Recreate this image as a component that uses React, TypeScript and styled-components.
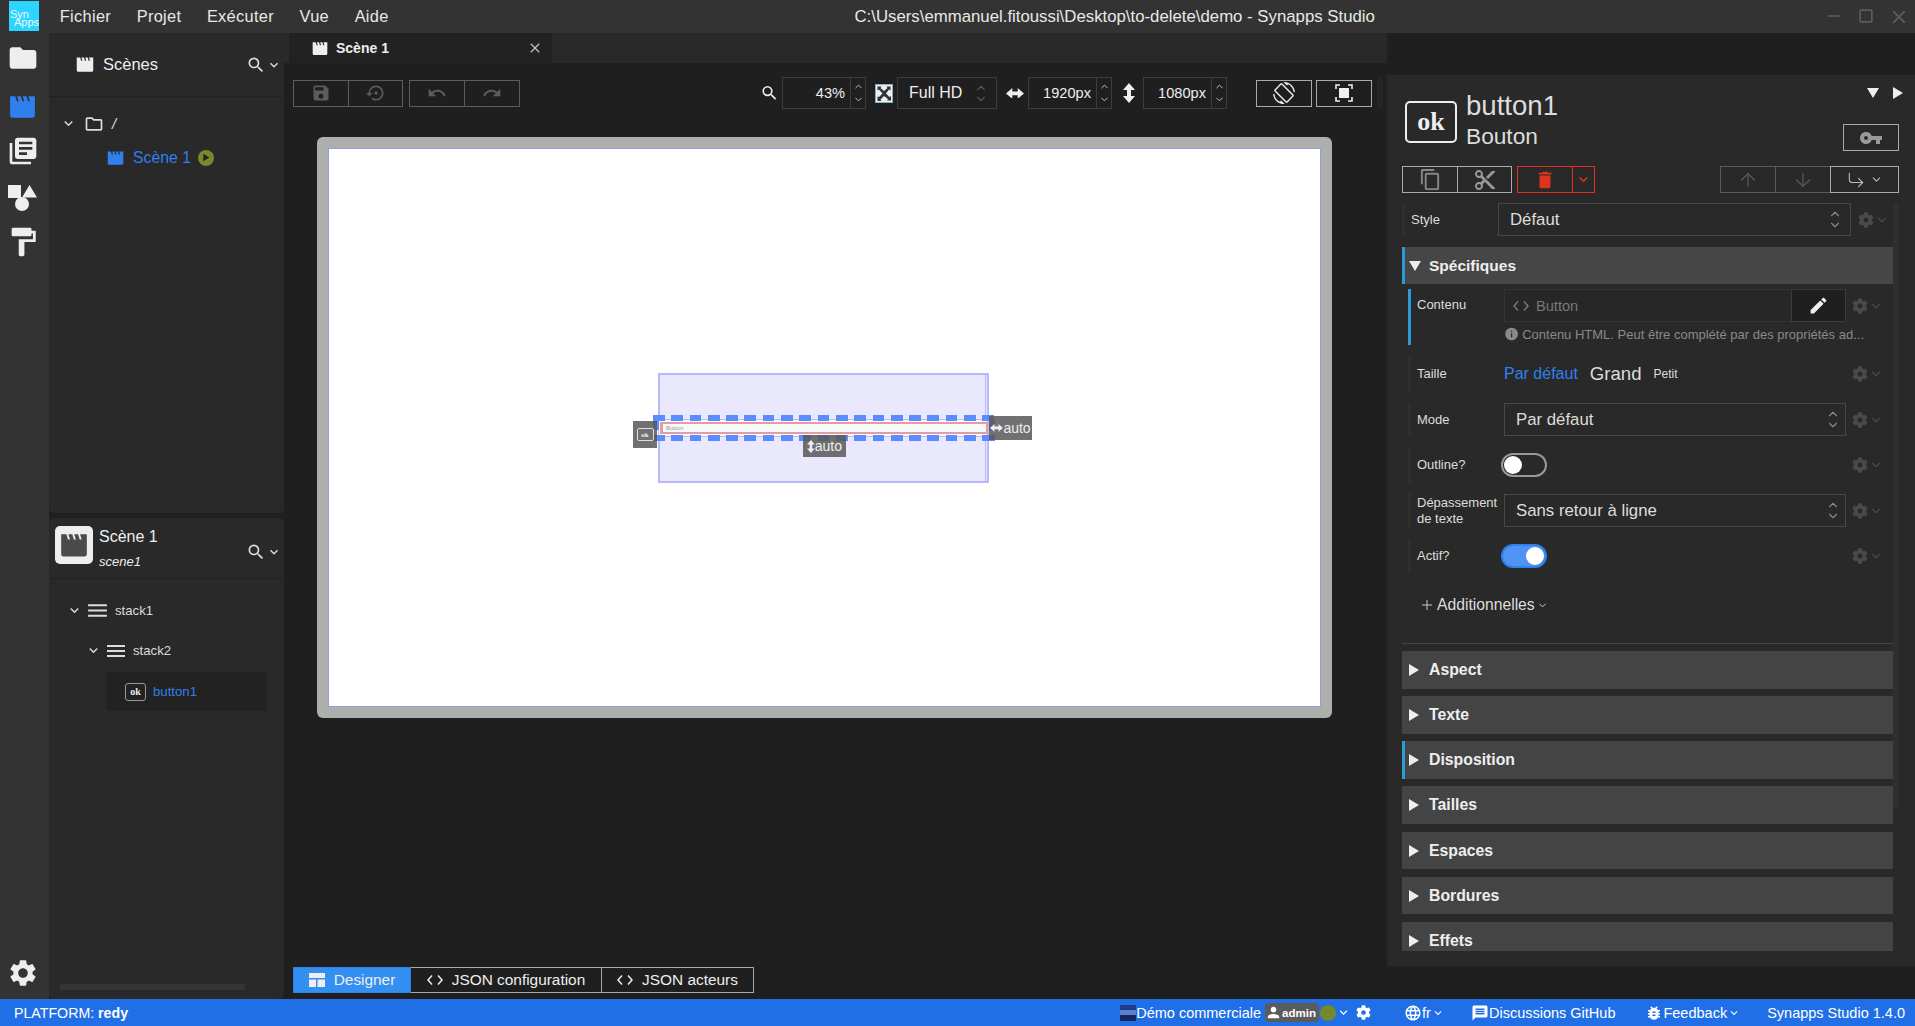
import { FC } from "react";
import styled, { createGlobalStyle } from "styled-components";
import {
  MdFolder,
  MdOutlineFolder,
  MdLibraryBooks,
  MdFormatPaint,
  MdSettings,
  MdSearch,
  MdKeyboardArrowDown,
  MdSave,
  MdSettingsBackupRestore,
  MdUndo,
  MdRedo,
  MdScreenRotation,
  MdVpnKey,
  MdContentCopy,
  MdContentCut,
  MdDelete,
  MdEdit,
  MdInfo,
  MdLanguage,
  MdMessage,
  MdBugReport,
  MdPerson,
  MdClose,
  MdMenu,
  MdPlayArrow,
  MdRemove,
  MdCropSquare,
} from "react-icons/md";
import { FaCog } from "react-icons/fa";
import {
  ArrowUp,
  ArrowDown,
  ChevronDown,
  ChevronUp,
  CornerDownRight,
  Plus,
} from "lucide-react";

const GlobalStyle = createGlobalStyle`
  html, body, #root {
    margin: 0;
    height: 100%;
    overflow: hidden;
    background: #1f1f1f;
  }
  * {
    box-sizing: border-box;
  }
  body {
    font-family: "Liberation Sans", Arial, sans-serif;
    color: #eee;
  }
`;

const Clapper: FC<{ size: number; color?: string }> = ({ size, color = "currentColor" }) => (
  <svg width={size} height={(size * 22) / 24} viewBox="0 0 24 22" fill={color}>
    <path
      fillRule="evenodd"
      d="M1 2h22v17a2 2 0 0 1-2 2H3a2 2 0 0 1-2-2V2ZM5.5 2l1.4 4.4h1.7L7.2 2H5.5Zm5 0 1.4 4.4h1.7L12.2 2h-1.7Zm5 0 1.4 4.4h1.7L17.2 2h-1.7Z"
    />
  </svg>
);

const ShapesIcon = () => (
  <svg width="29" height="26" viewBox="0 0 29 26" fill="#eee">
    <rect x="0" y="0" width="13" height="13" />
    <path d="M21.5 0 29 12.5H14Z" />
    <circle cx="14" cy="19" r="7" />
  </svg>
);

const FitIcon = () => (
  <svg width="18" height="19" viewBox="0 0 18 19">
    <rect x="0.5" y="0.5" width="17" height="18" fill="#eee" stroke="#7fb2d0" />
    <path d="M2.5 2.5h4L5.5 4 9 7l3.500-3-1-1.500h4v4l-1.500-1L11 9.500l3.500 3.500 1.500-1v4.500h-4l1-1.500L9 12l-3.500 3.500 1 1.500h-4v-4.500L4 13l3.500-3.500L4 5.500l-1.500 1Z" fill="#333" />
  </svg>
);

const FocusIcon = () => (
  <svg width="18" height="18" viewBox="0 0 18 18" fill="none" stroke="#eee" strokeWidth="1.6">
    <path d="M1 5V1h4M13 1h4v4M17 13v4h-4M5 17H1v-4" />
    <rect x="4" y="4" width="10" height="10" fill="#eee" stroke="none" />
  </svg>
);

const DesignerIcon = () => (
  <svg width="16" height="14" viewBox="0 0 16 14" fill="#eee">
    <rect x="0" y="0" width="16" height="5" />
    <rect x="0" y="6.5" width="7" height="7.5" />
    <rect x="8.5" y="6.5" width="7.5" height="7.5" />
  </svg>
);

const CodeIcon: FC<{ size?: number }> = ({ size = 16 }) => (
  <svg width={size} height={size} viewBox="0 0 16 16" fill="none" stroke="currentColor" strokeWidth="1.5">
    <path d="M5 3.5 1 8l4 4.5M11 3.5 15 8l-4 4.5" />
  </svg>
);

const ArrowsV: FC<{ h?: number }> = ({ h = 20 }) => (
  <svg width={(h * 12) / 20} height={h} viewBox="0 0 12 20" fill="currentColor">
    <path d="M6 0 12 7H8v6h4l-6 7-6-7h4V7H0Z" />
  </svg>
);

const ArrowsH: FC<{ w?: number }> = ({ w = 18 }) => (
  <svg width={w} height={(w * 12) / 20} viewBox="0 0 20 12" fill="currentColor">
    <path d="M0 6 7 0v4h6V0l7 6-7 6V8H7v4Z" />
  </svg>
);

const App: FC = () => {
  const sections = [
    { name: "Aspect", height: 38, top: 7 },
    { name: "Texte", height: 38, top: 7 },
    { name: "Disposition", height: 38, top: 7, accent: true },
    { name: "Tailles", height: 38, top: 7 },
    { name: "Espaces", height: 37, top: 8 },
    { name: "Bordures", height: 37, top: 8 },
    { name: "Effets", height: 38, top: 8 },
  ];

  return (
    <>
      <GlobalStyle />
      <Page>
        <TopBar>
          <Logo>
            <span>Syn</span>
            <LogoSecond>Apps</LogoSecond>
          </Logo>
          <MenuItem>Fichier</MenuItem>
          <MenuItem>Projet</MenuItem>
          <MenuItem>Exécuter</MenuItem>
          <MenuItem>Vue</MenuItem>
          <MenuItem>Aide</MenuItem>
          <WindowTitle>C:\Users\emmanuel.fitoussi\Desktop\to-delete\demo - Synapps Studio</WindowTitle>
          <WindowControls>
            <MdRemove size={20} />
            <MdCropSquare size={20} />
            <MdClose size={22} />
          </WindowControls>
        </TopBar>

        <Body>
          <Rail>
            <RailIcon $top={9}><MdFolder size={32} /></RailIcon>
            <RailIcon $top={20} $active><Clapper size={27} /></RailIcon>
            <RailIcon $top={16}><MdLibraryBooks size={32} /></RailIcon>
            <RailIcon $top={18}><ShapesIcon /></RailIcon>
            <RailIcon $top={14}><MdFormatPaint size={34} /></RailIcon>
            <RailGear><MdSettings size={32} /></RailGear>
          </Rail>

          <LeftColumn>
            <ScenesPanel>
              <ScenesHeader>
                <Clapper size={18} />
                <ScenesTitle>Scènes</ScenesTitle>
                <HeaderTools>
                  <MdSearch size={20} />
                  <MdKeyboardArrowDown size={16} />
                </HeaderTools>
              </ScenesHeader>
              <TreeRow $indent={11} $height={31} $top={11}>
                <MdKeyboardArrowDown size={17} />
                <TreeIcon $left={7}><MdOutlineFolder size={20} /></TreeIcon>
                <SlashText>/</SlashText>
              </TreeRow>
              <TreeRow $indent={58} $height={31} $top={3} $active>
                <Clapper size={17} />
                <SceneName>Scène 1</SceneName>
                <PlayBadge><MdPlayArrow size={13} /></PlayBadge>
              </TreeRow>
            </ScenesPanel>

            <ScenePanel>
              <SceneHeader>
                <SceneTile><Clapper size={28} color="#4a4a4a" /></SceneTile>
                <SceneTitles>
                  <SceneTitle>Scène 1</SceneTitle>
                  <SceneId>scene1</SceneId>
                </SceneTitles>
                <SceneTools>
                  <MdSearch size={20} />
                  <MdKeyboardArrowDown size={16} />
                </SceneTools>
              </SceneHeader>
              <TreeRow $indent={17} $height={33} $top={15}>
                <MdKeyboardArrowDown size={17} />
                <TreeIcon $left={2}><MdMenu size={25} /></TreeIcon>
                <NodeName $left={5}>stack1</NodeName>
              </TreeRow>
              <TreeRow $indent={36} $height={33} $top={7}>
                <MdKeyboardArrowDown size={17} />
                <TreeIcon $left={2}><MdMenu size={24} /></TreeIcon>
                <NodeName $left={5}>stack2</NodeName>
              </TreeRow>
              <SelectedNode>
                <OkBadge $w={21} $h={18} $font={10} $border="#999" $radius={3}>ok</OkBadge>
                <NodeName $left={7} $active>button1</NodeName>
              </SelectedNode>
              <PanelScrollbar />
            </ScenePanel>
          </LeftColumn>

          <Main>
            <TabBar>
              <Tab>
                <Clapper size={16} />
                <TabLabel>Scène 1</TabLabel>
                <TabClose><MdClose size={16} /></TabClose>
              </Tab>
            </TabBar>

            <Toolbar>
              <ButtonGroup>
                <ToolButton $w={56} $muted><MdSave size={20} /></ToolButton>
                <ToolButton $w={55} $muted><MdSettingsBackupRestore size={20} /></ToolButton>
              </ButtonGroup>
              <ButtonGroup $left={6}>
                <ToolButton $w={56} $muted><MdUndo size={20} /></ToolButton>
                <ToolButton $w={56} $muted><MdRedo size={20} /></ToolButton>
              </ButtonGroup>
              <GlyphCell $w={22} $pad={3} $auto><MdSearch size={20} /></GlyphCell>
              <SpinField>
                <SpinValue>43%</SpinValue>
                <SpinButtons><ChevronUp size={11} /><ChevronDown size={11} /></SpinButtons>
              </SpinField>
              <GlyphCell $w={31} $pad={4}><FitIcon /></GlyphCell>
              <ResolutionSelect>
                Full HD
                <UpDown $color="#555" $right={8}><ChevronUp size={14} /><ChevronDown size={14} /></UpDown>
              </ResolutionSelect>
              <GlyphCell $w={31} $pad={4}><ArrowsH /></GlyphCell>
              <SpinField>
                <SpinValue>1920px</SpinValue>
                <SpinButtons><ChevronUp size={11} /><ChevronDown size={11} /></SpinButtons>
              </SpinField>
              <GlyphCell $w={31} $pad={8}><ArrowsV /></GlyphCell>
              <SpinField>
                <SpinValue>1080px</SpinValue>
                <SpinButtons><ChevronUp size={11} /><ChevronDown size={11} /></SpinButtons>
              </SpinField>
              <ViewButtons>
                <ToolButton $w={56} $bright><MdScreenRotation size={22} /></ToolButton>
                <ToolButton $w={56} $bright><FocusIcon /></ToolButton>
              </ViewButtons>
              <ToolbarScroll />
            </Toolbar>

            <Frame>
              <Viewport>
                <OuterStack />
                <ButtonOutline />
                <DashedSelection />
                <SelectedButton>Button</SelectedButton>
                <TypeLabel>
                  <OkBadge $w={17} $h={13} $font={7} $border="#ddd" $radius={2}>ok</OkBadge>
                </TypeLabel>
                <WidthLabel><ArrowsH w={13} />auto</WidthLabel>
                <HeightLabel><ArrowsV h={13} />auto</HeightLabel>
              </Viewport>
            </Frame>

            <ModeTabs>
              <ModeTab $w={118} $active><DesignerIcon />Designer</ModeTab>
              <ModeTab $w={191}><CodeIcon />JSON configuration</ModeTab>
              <ModeTab $w={152}><CodeIcon />JSON acteurs</ModeTab>
            </ModeTabs>
          </Main>

          <Inspector>
            <InspectorHeader>
              <InspectorBadge $w={52} $h={42} $font={26} $border="#eee" $radius={5}>ok</InspectorBadge>
              <InspectorTitles>
                <InspectorName>button1</InspectorName>
                <InspectorType>Bouton</InspectorType>
              </InspectorTitles>
              <InspectorCorner>
                <PanelArrows>
                  <TriangleDown $size={6} />
                  <TriangleRight $size={6} />
                </PanelArrows>
                <ToolButton $w={56} $bright><MdVpnKey size={24} color="#999" /></ToolButton>
              </InspectorCorner>
            </InspectorHeader>

            <ActionRow>
              <ButtonGroup>
                <ToolButton $w={56} $bright><MdContentCopy size={23} color="#888" /></ToolButton>
                <ToolButton $w={55} $bright><MdContentCut size={24} color="#999" /></ToolButton>
              </ButtonGroup>
              <ButtonGroup $left={5}>
                <ToolButton $w={56} $danger><MdDelete size={22} /></ToolButton>
                <ToolButton $w={23} $danger><MdKeyboardArrowDown size={17} /></ToolButton>
              </ButtonGroup>
              <ButtonGroup $auto>
                <ToolButton $w={56} $muted><ArrowUp size={22} strokeWidth={1.3} /></ToolButton>
                <ToolButton $w={56} $muted><ArrowDown size={22} strokeWidth={1.3} /></ToolButton>
                <ToolButton $w={69} $bright>
                  <CornerDownRight size={20} strokeWidth={1.3} color="#bbb" />
                  <ChevronDown size={13} color="#bbb" />
                </ToolButton>
              </ButtonGroup>
            </ActionRow>

            <PropsScroll>
              <PropRow $indent={0} $bar="#2f2f2f" $height={33}>
                <PropLabel>Style</PropLabel>
                <PropSelect $w={353}>
                  Défaut
                  <UpDown $color="#888" $right={8}><ChevronUp size={14} /><ChevronDown size={14} /></UpDown>
                </PropSelect>
                <GearMenu $left={7} />
              </PropRow>

              <OpenSection>
                <TriangleDown $size={6} />
                <OpenTitle>Spécifiques</OpenTitle>
              </OpenSection>

              <PropRow $top={5} $bar="#2a9ad8" $height={56} $start>
                <PropLabel $top={8}>Contenu</PropLabel>
                <ContentColumn>
                  <ContentInput>
                    <ContentField>
                      <CodeIcon size={16} />
                      <span>Button</span>
                    </ContentField>
                    <EditButton><MdEdit size={21} /></EditButton>
                  </ContentInput>
                  <HelpText>
                    <MdInfo size={16} />
                    <span>Contenu HTML. Peut être complété par des propriétés ad...</span>
                  </HelpText>
                </ContentColumn>
                <GearMenu $left={6} $alignTop />
              </PropRow>

              <PropRow $top={12} $height={34}>
                <PropLabel>Taille</PropLabel>
                <SizeOptions>
                  <SizeOption $size={16} $color="#2f80ed">Par défaut</SizeOption>
                  <SizeOption $size={18.6} $color="#ddd">Grand</SizeOption>
                  <SizeOption $size={12} $color="#ddd">Petit</SizeOption>
                </SizeOptions>
                <GearMenu $left={6} />
              </PropRow>

              <PropRow $top={12} $height={33}>
                <PropLabel>Mode</PropLabel>
                <PropSelect $w={342}>
                  Par défaut
                  <UpDown $color="#888" $right={5}><ChevronUp size={14} /><ChevronDown size={14} /></UpDown>
                </PropSelect>
                <GearMenu $left={6} />
              </PropRow>

              <PropRow $top={12} $height={34}>
                <PropLabel>Outline?</PropLabel>
                <ToggleSlot>
                  <Toggle $on={false} />
                </ToggleSlot>
                <GearMenu $left={6} />
              </PropRow>

              <PropRow $top={12} $height={33}>
                <PropLabel>Dépassement de texte</PropLabel>
                <PropSelect $w={342}>
                  Sans retour à ligne
                  <UpDown $color="#888" $right={5}><ChevronUp size={14} /><ChevronDown size={14} /></UpDown>
                </PropSelect>
                <GearMenu $left={6} />
              </PropRow>

              <PropRow $top={12} $height={34}>
                <PropLabel>Actif?</PropLabel>
                <ToggleSlot>
                  <Toggle $on />
                </ToggleSlot>
                <GearMenu $left={6} />
              </PropRow>

              <Additional>
                <Plus size={16} strokeWidth={1.3} />
                Additionnelles
                <ChevronDown size={11} />
              </Additional>
              <Divider />

              {sections.map((section) => (
                <ClosedSection key={section.name} $height={section.height} $top={section.top} $accent={section.accent}>
                  <TriangleRight $size={6} />
                  <SectionTitle>{section.name}</SectionTitle>
                </ClosedSection>
              ))}
              <ScrollTrack />
            </PropsScroll>
          </Inspector>
        </Body>

        <StatusBar>
          <StatusLeft>PLATFORM: <b>redy</b></StatusLeft>
          <StatusGroup>
            <Flag />
            <StatusText>Démo commerciale</StatusText>
            <AdminPill><MdPerson size={17} />admin</AdminPill>
            <StatusDot />
            <MdKeyboardArrowDown size={15} />
            <StatusGear><FaCog size={15} /></StatusGear>
          </StatusGroup>
          <StatusGroup $left={33}>
            <MdLanguage size={18} />
            <StatusText>fr</StatusText>
            <MdKeyboardArrowDown size={14} />
          </StatusGroup>
          <StatusGroup $left={26}>
            <MdMessage size={18} />
            <StatusText>Discussions GitHub</StatusText>
          </StatusGroup>
          <StatusGroup $left={30}>
            <MdBugReport size={18} />
            <StatusText>Feedback</StatusText>
            <MdKeyboardArrowDown size={14} />
          </StatusGroup>
          <VersionText>Synapps Studio 1.4.0</VersionText>
        </StatusBar>
      </Page>
    </>
  );
};

export default App;

const Page = styled.div`
  width: 1915px;
  height: 1026px;
  display: flex;
  flex-direction: column;
  background: #1f1f1f;
`;

const TopBar = styled.div`
  height: 33px;
  flex: none;
  display: flex;
  align-items: center;
  background: #333;
  font-size: 16px;
  color: #e8e8e8;
`;

const Logo = styled.div`
  width: 30px;
  height: 30px;
  margin: 0 8px 2px 9px;
  padding: 9px 0 0 1px;
  background: #2dd4ff;
  font-size: 11px;
  line-height: 8px;
  color: #e8f8ff;
  display: flex;
  flex-direction: column;
  overflow: hidden;
`;

const LogoSecond = styled.span`
  margin-left: 4px;
`;

const MenuItem = styled.div`
  margin: 0 12.8px;
  font-size: 16.4px;
  letter-spacing: 0.3px;
`;

const WindowTitle = styled.div`
  margin-left: 453px;
  font-size: 16.8px;
  white-space: nowrap;
`;

const WindowControls = styled.div`
  margin-left: auto;
  margin-right: 5px;
  display: flex;
  gap: 12px;
  color: #5c5c5c;
`;

const Body = styled.div`
  flex: 1;
  min-height: 0;
  display: flex;
`;

const Rail = styled.div`
  width: 49px;
  flex: none;
  display: flex;
  flex-direction: column;
  align-items: center;
  background: #333;
`;

const RailIcon = styled.div<{ $top: number; $active?: boolean }>`
  margin-top: ${(p) => p.$top}px;
  margin-left: -4px;
  display: flex;
  color: ${(p) => (p.$active ? "#2f80ed" : "#eee")};
`;

const RailGear = styled.div`
  margin-top: auto;
  margin-bottom: 10px;
  margin-left: -4px;
  display: flex;
  color: #eee;
`;

const LeftColumn = styled.div`
  width: 235px;
  flex: none;
  display: flex;
  flex-direction: column;
  gap: 5px;
`;

const ScenesPanel = styled.div`
  height: 480px;
  flex: none;
  background: #292929;
  border-radius: 0 0 5px 5px;
`;

const ScenesHeader = styled.div`
  height: 64px;
  padding: 0 2px 0 27px;
  display: flex;
  align-items: center;
  border-bottom: 1px solid #222;
`;

const ScenesTitle = styled.div`
  margin-left: 9px;
  font-size: 16.5px;
`;

const HeaderTools = styled.div`
  margin-left: auto;
  display: flex;
  align-items: center;
  color: #ddd;
`;

const TreeRow = styled.div<{ $indent: number; $height: number; $top: number; $active?: boolean }>`
  height: ${(p) => p.$height}px;
  margin-top: ${(p) => p.$top}px;
  padding-left: ${(p) => p.$indent}px;
  display: flex;
  align-items: center;
  color: ${(p) => (p.$active ? "#2f80ed" : "#ddd")};
`;

const TreeIcon = styled.span<{ $left: number }>`
  margin-left: ${(p) => p.$left}px;
  display: flex;
`;

const SlashText = styled.span`
  margin-left: 8px;
  font-size: 15px;
  font-style: italic;
`;

const SceneName = styled.span`
  margin-left: 9px;
  font-size: 15.8px;
`;

const PlayBadge = styled.span`
  width: 16px;
  height: 16px;
  margin-left: 7px;
  border-radius: 50%;
  background: #77892a;
  color: #222;
  display: flex;
  align-items: center;
  justify-content: center;
`;

const ScenePanel = styled.div`
  flex: 1;
  position: relative;
  background: #292929;
  border-radius: 5px;
`;

const SceneHeader = styled.div`
  height: 61px;
  padding: 8px 2px 0 6px;
  display: flex;
  border-bottom: 1px solid #222;
`;

const SceneTile = styled.div`
  width: 38px;
  height: 38px;
  background: #eee;
  border-radius: 5px;
  display: flex;
  align-items: center;
  justify-content: center;
`;

const SceneTitles = styled.div`
  margin-left: 6px;
  padding-top: 1px;
`;

const SceneTitle = styled.div`
  font-size: 16px;
  line-height: 20px;
`;

const SceneId = styled.div`
  margin-top: 7px;
  font-size: 13px;
  font-style: italic;
`;

const SceneTools = styled.div`
  margin-left: auto;
  height: 40px;
  padding-top: 12px;
  display: flex;
  align-items: center;
  color: #ddd;
`;

const NodeName = styled.span<{ $left: number; $active?: boolean }>`
  margin-left: ${(p) => p.$left}px;
  font-size: 13.2px;
  color: ${(p) => (p.$active ? "#2f80ed" : "#ddd")};
`;

const SelectedNode = styled.div`
  width: 161px;
  height: 39px;
  margin: 5px 0 0 57px;
  padding-left: 19px;
  background: #222;
  display: flex;
  align-items: center;
`;

const OkBadge = styled.span<{ $w: number; $h: number; $font: number; $border: string; $radius: number }>`
  width: ${(p) => p.$w}px;
  height: ${(p) => p.$h}px;
  flex: none;
  border: ${(p) => (p.$w > 30 ? 2 : 1)}px solid ${(p) => p.$border};
  border-radius: ${(p) => p.$radius}px;
  display: flex;
  align-items: center;
  justify-content: center;
  font-family: "Liberation Serif", "Times New Roman", serif;
  font-weight: 700;
  font-size: ${(p) => p.$font}px;
  color: #eee;
`;

const InspectorBadge = styled(OkBadge)`
  margin-bottom: 8px;
`;

const PanelScrollbar = styled.div`
  position: absolute;
  left: 11px;
  bottom: 9px;
  width: 185px;
  height: 6px;
  background: #353535;
`;

const Main = styled.div`
  flex: 1;
  min-width: 0;
  display: flex;
  flex-direction: column;
`;

const TabBar = styled.div`
  height: 30px;
  flex: none;
  padding-left: 5px;
  background: #292929;
`;

const Tab = styled.div`
  width: 263px;
  height: 30px;
  padding: 0 9px 0 23px;
  background: #222;
  display: flex;
  align-items: center;
  color: #eee;
`;

const TabLabel = styled.span`
  margin-left: 8px;
  font-size: 14px;
  font-weight: 700;
`;

const TabClose = styled.span`
  margin-left: auto;
  display: flex;
  color: #bbb;
`;

const Toolbar = styled.div`
  height: 32px;
  flex: none;
  margin-top: 14px;
  padding: 0 4px 0 9px;
  display: flex;
  align-items: center;
`;

const ToolbarScroll = styled.div`
  width: 6px;
  height: 32px;
  margin-left: 5px;
  background: #252525;
`;

const ButtonGroup = styled.div<{ $left?: number; $auto?: boolean }>`
  margin-left: ${(p) => (p.$auto ? "auto" : `${p.$left ?? 0}px`)};
  display: flex;
`;

const ToolButton = styled.div<{
  $w: number;
  $muted?: boolean;
  $bright?: boolean;
  $danger?: boolean;
}>`
  width: ${(p) => p.$w}px;
  height: 27px;
  display: flex;
  align-items: center;
  justify-content: center;
  gap: 4px;
  border: 1px solid
    ${(p) => (p.$danger ? "#e0331b" : p.$bright ? "#aaa" : "#5c5c5c")};
  color: ${(p) => (p.$danger ? "#e0331b" : p.$bright ? "#eee" : "#5c5c5c")};
  & + & {
    margin-left: -1px;
  }
`;

const GlyphCell = styled.div<{ $w: number; $pad: number; $auto?: boolean }>`
  width: ${(p) => p.$w}px;
  margin-left: ${(p) => (p.$auto ? "auto" : "0")};
  padding-right: ${(p) => p.$pad}px;
  display: flex;
  justify-content: flex-end;
  color: #eee;
`;

const SpinField = styled.div`
  width: 84px;
  height: 32px;
  display: flex;
  border: 1px solid #3c3c3c;
`;

const SpinValue = styled.div`
  flex: 1;
  padding-right: 5px;
  display: flex;
  align-items: center;
  justify-content: flex-end;
  font-size: 14.6px;
`;

const SpinButtons = styled.div`
  width: 15px;
  display: flex;
  flex-direction: column;
  align-items: center;
  justify-content: center;
  gap: 2px;
  border-left: 1px solid #3c3c3c;
  color: #ccc;
`;

const UpDown = styled.span<{ $color: string; $right: number }>`
  margin-left: auto;
  margin-right: ${(p) => p.$right}px;
  display: flex;
  flex-direction: column;
  color: ${(p) => p.$color};
  & > svg + svg {
    margin-top: -3px;
  }
`;

const ResolutionSelect = styled.div`
  width: 100px;
  height: 32px;
  padding-left: 11px;
  display: flex;
  align-items: center;
  border: 1px solid #3c3c3c;
  font-size: 16px;
`;

const ViewButtons = styled.div`
  margin-left: 29px;
  display: flex;
  gap: 5px;
`;

const Frame = styled.div`
  width: 1015px;
  height: 581px;
  flex: none;
  margin: 28px 0 0 33px;
  padding: 11px;
  background: #adafad;
  border-radius: 6px;
`;

const Viewport = styled.div`
  position: relative;
  width: 100%;
  height: 100%;
  background: #fff;
  border: 1px solid #9a9ae8;
`;

const OuterStack = styled.div`
  position: absolute;
  left: 329px;
  top: 224px;
  width: 331px;
  height: 110px;
  background: #e9e8fd;
  border: 2px solid #b8b8ff;
  &::after {
    content: "";
    position: absolute;
    top: 0;
    bottom: 0;
    right: 1px;
    width: 1px;
    background: #b8b8ff;
  }
`;

const ButtonOutline = styled.div`
  position: absolute;
  left: 329px;
  top: 270px;
  width: 330px;
  height: 18px;
  background: #fbfbff;
  border: 1px solid #b8b8ff;
`;

const dash = "repeating-linear-gradient(90deg, #5b8cff 0 11.7px, transparent 11.7px 18.3px)";

const DashedSelection = styled.div`
  position: absolute;
  left: 324px;
  top: 266px;
  width: 342px;
  height: 26px;
  background:
    ${dash} top left / 100% 6px no-repeat,
    ${dash} bottom left / 100% 6px no-repeat;
  &::before,
  &::after {
    content: "";
    position: absolute;
    top: 6px;
    bottom: 0;
    width: 6px;
    background: linear-gradient(#5b8cff 0 9px, transparent 9px 14px, #5b8cff 14px);
  }
  &::before {
    left: 0;
  }
  &::after {
    right: 0;
  }
`;

const SelectedButton = styled.div`
  position: absolute;
  left: 331px;
  top: 273px;
  width: 328px;
  height: 12px;
  padding-left: 3px;
  background: #f9f9fc;
  border: 2px solid #e29e9e;
  border-width: 2px 2px 2px 3px;
  font-size: 6px;
  line-height: 8px;
  color: #999;
`;

const OverlayLabel = styled.div`
  position: absolute;
  display: flex;
  align-items: center;
  justify-content: center;
  background: rgba(88, 88, 88, 0.85);
  color: #eee;
  font-size: 14px;
`;

const TypeLabel = styled(OverlayLabel)`
  left: 304px;
  top: 272px;
  width: 24px;
  height: 27px;
`;

const WidthLabel = styled(OverlayLabel)`
  left: 660px;
  top: 267px;
  width: 43px;
  height: 24px;
`;

const HeightLabel = styled(OverlayLabel)`
  left: 474px;
  top: 286px;
  width: 43px;
  height: 22px;
`;

const ModeTabs = styled.div`
  margin: auto 0 6px 9px;
  display: flex;
`;

const ModeTab = styled.div<{ $w: number; $active?: boolean }>`
  width: ${(p) => p.$w}px;
  height: 26px;
  display: flex;
  align-items: center;
  justify-content: center;
  gap: 9px;
  font-size: 15.4px;
  background: ${(p) => (p.$active ? "#3490f0" : "transparent")};
  border: 1px solid ${(p) => (p.$active ? "#2f80ed" : "#aaa")};
  & + & {
    border-left-width: ${(p) => (p.$active ? 1 : 0)}px;
  }
`;

const Inspector = styled.div`
  width: 528px;
  height: 891px;
  flex: none;
  margin-top: 42px;
  padding-left: 15px;
  background: #292929;
`;

const InspectorHeader = styled.div`
  height: 76px;
  padding: 12px 16px 0 3px;
  display: flex;
  align-items: flex-end;
`;

const InspectorTitles = styled.div`
  margin-left: 9px;
  color: #ddd;
`;

const InspectorName = styled.div`
  font-size: 27.6px;
  line-height: 30px;
`;

const InspectorType = styled.div`
  font-size: 22.7px;
  line-height: 30px;
`;

const InspectorCorner = styled.div`
  margin-left: auto;
  align-self: stretch;
  display: flex;
  flex-direction: column;
  align-items: flex-end;
  justify-content: space-between;
`;

const PanelArrows = styled.div`
  margin-right: -4px;
  display: flex;
  align-items: center;
  gap: 14px;
`;

const TriangleDown = styled.span<{ $size: number }>`
  width: 0;
  height: 0;
  flex: none;
  border-left: ${(p) => p.$size}px solid transparent;
  border-right: ${(p) => p.$size}px solid transparent;
  border-top: ${(p) => p.$size * 1.7}px solid #eee;
`;

const TriangleRight = styled.span<{ $size: number }>`
  width: 0;
  height: 0;
  flex: none;
  border-top: ${(p) => p.$size}px solid transparent;
  border-bottom: ${(p) => p.$size}px solid transparent;
  border-left: ${(p) => p.$size * 1.7}px solid #eee;
`;

const ActionRow = styled.div`
  width: 497px;
  margin-top: 15px;
  display: flex;
`;

const PropsScroll = styled.div`
  position: relative;
  width: 497px;
  height: 748px;
  margin-top: 10px;
  overflow: hidden;
`;

const PropRow = styled.div<{
  $indent?: number;
  $bar?: string;
  $height: number;
  $top?: number;
  $start?: boolean;
}>`
  width: 491px;
  height: ${(p) => p.$height}px;
  margin-top: ${(p) => p.$top ?? 0}px;
  padding-left: ${(p) => p.$indent ?? 6}px;
  display: flex;
  align-items: ${(p) => (p.$start ? "flex-start" : "center")};
  &::before {
    content: "";
    width: 3px;
    height: 100%;
    flex: none;
    background: ${(p) => p.$bar ?? "#2f2f2f"};
  }
`;

const PropLabel = styled.div<{ $top?: number }>`
  width: 93px;
  flex: none;
  margin-top: ${(p) => p.$top ?? 0}px;
  padding-left: 6px;
  font-size: 13px;
  line-height: 16px;
  color: #ddd;
`;

const PropSelect = styled.div<{ $w: number }>`
  width: ${(p) => p.$w}px;
  height: 33px;
  flex: none;
  padding-left: 11px;
  display: flex;
  align-items: center;
  border: 1px solid #484848;
  font-size: 16.8px;
  color: #ddd;
`;

const GearWrap = styled.div<{ $left: number; $alignTop?: boolean }>`
  margin-left: ${(p) => p.$left}px;
  margin-top: ${(p) => (p.$alignTop ? 9 : 0)}px;
  display: flex;
  align-items: center;
  gap: 1px;
  color: #4a4a4a;
`;

const GearMenu: FC<{ $left: number; $alignTop?: boolean }> = ({ $left, $alignTop }) => (
  <GearWrap $left={$left} $alignTop={$alignTop}>
    <FaCog size={16} />
    <ChevronDown size={14} />
  </GearWrap>
);

const OpenSection = styled.div`
  width: 491px;
  height: 37px;
  margin-top: 11px;
  padding-left: 4px;
  display: flex;
  align-items: center;
  background: #464646;
  border-left: 3px solid #2a9ad8;
`;

const SectionTitle = styled.span`
  margin-left: 10px;
  font-size: 15.8px;
  font-weight: 700;
  color: #eee;
`;

const OpenTitle = styled(SectionTitle)`
  margin-left: 8px;
  font-size: 15.5px;
`;

const ClosedSection = styled.div<{ $height: number; $top: number; $accent?: boolean }>`
  width: 491px;
  height: ${(p) => p.$height}px;
  margin-top: ${(p) => p.$top}px;
  padding-left: ${(p) => (p.$accent ? 4 : 7)}px;
  display: flex;
  align-items: center;
  background: #444;
  border-left: ${(p) => (p.$accent ? "3px solid #2a9ad8" : "0")};
  flex: none;
`;

const ContentColumn = styled.div`
  width: 342px;
  flex: none;
`;

const ContentInput = styled.div`
  height: 33px;
  display: flex;
`;

const ContentField = styled.div`
  flex: 1;
  padding-left: 8px;
  display: flex;
  align-items: center;
  gap: 7px;
  border: 1px solid #333;
  border-right: 0;
  background: #272727;
  color: #777;
  font-size: 14.6px;
`;

const EditButton = styled.div`
  width: 55px;
  display: flex;
  align-items: center;
  justify-content: center;
  background: #1f1f1f;
  border: 1px solid #3c3c3c;
  color: #eee;
`;

const HelpText = styled.div`
  margin-top: 4px;
  width: 360px;
  display: flex;
  align-items: center;
  gap: 3px;
  font-size: 13px;
  white-space: nowrap;
  color: #8a8a8a;
`;

const SizeOptions = styled.div`
  width: 342px;
  flex: none;
  display: flex;
  align-items: center;
  gap: 12px;
`;

const SizeOption = styled.span<{ $size: number; $color: string }>`
  font-size: ${(p) => p.$size}px;
  color: ${(p) => p.$color};
`;

const ToggleSlot = styled.div`
  width: 342px;
  flex: none;
  margin-left: -3px;
  margin-right: 3px;
`;

const Toggle = styled.div<{ $on: boolean }>`
  position: relative;
  width: 46px;
  height: 24px;
  border-radius: 12px;
  background: ${(p) => (p.$on ? "#4f94f3" : "transparent")};
  border: 2px solid ${(p) => (p.$on ? "#2f80ed" : "#999")};
  &::after {
    content: "";
    position: absolute;
    top: 1px;
    left: ${(p) => (p.$on ? "23px" : "1px")};
    width: 18px;
    height: 18px;
    border-radius: 50%;
    background: #fff;
  }
`;

const Additional = styled.div`
  height: 20px;
  margin: 22px 0 0 17px;
  display: flex;
  align-items: center;
  gap: 2px;
  font-size: 15.7px;
  color: #ddd;
`;

const Divider = styled.div`
  width: 491px;
  height: 1px;
  margin-top: 28px;
  background: #444;
`;

const ScrollTrack = styled.div`
  position: absolute;
  right: 0;
  top: 0;
  width: 6px;
  height: 604px;
  background: #2f2f2f;
`;

const StatusBar = styled.div`
  height: 27px;
  flex: none;
  padding: 0 10px 0 14px;
  display: flex;
  align-items: center;
  background: #206fe6;
  color: #fff;
`;

const StatusLeft = styled.div`
  margin-right: auto;
  font-size: 14.2px;
`;

const StatusGroup = styled.div<{ $left?: number }>`
  margin-left: ${(p) => p.$left ?? 0}px;
  display: flex;
  align-items: center;
`;

const StatusText = styled.span`
  font-size: 14.5px;
  white-space: nowrap;
`;

const StatusGear = styled.span`
  margin-left: 5px;
  display: flex;
`;

const Flag = styled.span`
  width: 16px;
  height: 16px;
  background: linear-gradient(#1f3b8a 0 30%, #5c7fd0 30% 60%, #18265e 60%);
`;

const AdminPill = styled.span`
  width: 54px;
  height: 19px;
  margin-left: 4px;
  display: flex;
  align-items: center;
  background: #5b5b5b;
  border-radius: 4px;
  font-size: 11.5px;
  font-weight: 700;
`;

const StatusDot = styled.span`
  width: 16px;
  height: 16px;
  margin-left: 1px;
  border-radius: 50%;
  background: #77892a;
`;

const VersionText = styled.span`
  margin-left: 26px;
  font-size: 14.5px;
  white-space: nowrap;
`;
